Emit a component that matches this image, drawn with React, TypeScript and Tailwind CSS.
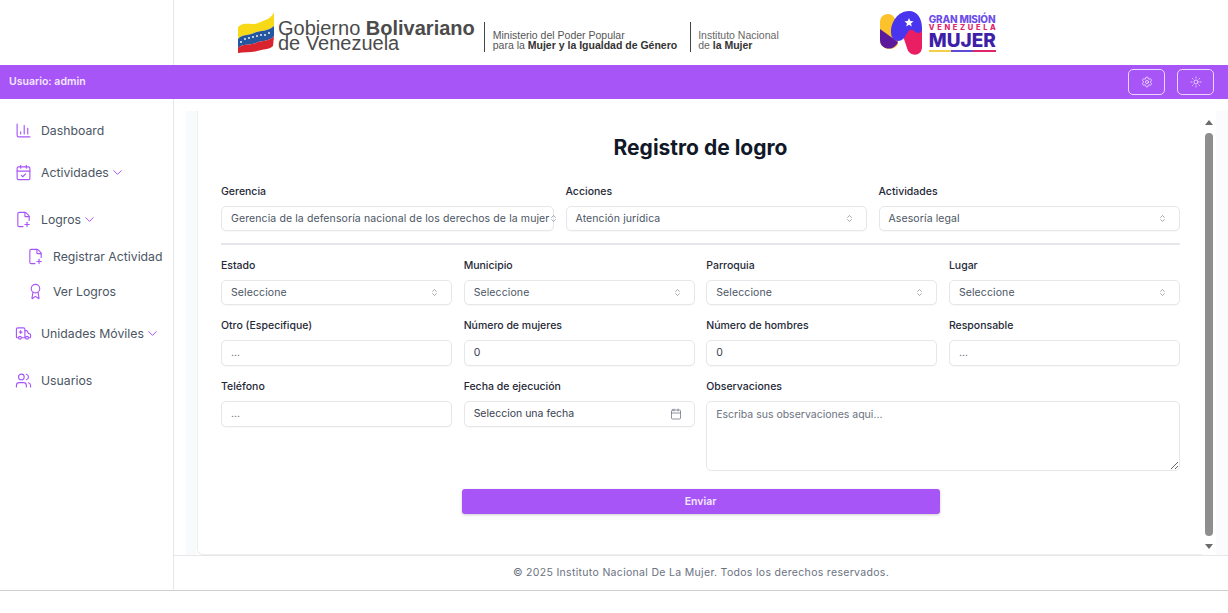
import React from 'react';
import {
  Ambulance,
  Award,
  Calendar,
  CalendarCheck,
  ChartColumn,
  ChevronDown,
  ChevronsUpDown,
  FilePlus2,
  Settings,
  Sun,
  Users,
} from 'lucide-react';

const FlagLogo = () => (
  <svg width="39" height="42" viewBox="0 0 39 42" className="shrink-0">
    <path d="M1 15 C8 9 14 14 21 11 C29 8 35 6 37 0 L37 14 C30 20 24 18 17 21 C10 24 5 22 1 27 Z" fill="#f7d917" />
    <path d="M1 27 C5 22 10 24 17 21 C24 18 30 20 37 14 L37 24 C32 30 25 28 19 31 C12 34 6 31 1 36 Z" fill="#24579f" />
    <path d="M1 36 C6 31 12 34 19 31 C25 28 32 30 37 24 L36 34 C32 38 26 37 20 39 C14 41 7 40 1 41 Z" fill="#d9232e" />
    <g fill="#ffffff">
      <circle cx="4" cy="30" r="0.9" /><circle cx="8" cy="27" r="0.9" /><circle cx="12" cy="26" r="0.9" />
      <circle cx="16" cy="25" r="0.9" /><circle cx="20" cy="24" r="0.9" /><circle cx="24" cy="23" r="0.9" />
      <circle cx="28" cy="23" r="0.9" /><circle cx="32" cy="21" r="0.9" />
    </g>
  </svg>
);

const MujerLogo = () => (
  <svg width="46" height="46" viewBox="0 0 46 46" className="shrink-0">
    <path d="M2 12 C2 3 14 1 17 9 L20 20 L20 34 C16 42 2 40 2 30 Z" fill="#fcc22c" />
    <path d="M2 19 L20 32 C16 42 2 40 2 30 Z" fill="#5b1a9c" />
    <path d="M30 16 L44 19 L44 37 C44 47 31 47 29 38 L25 26 Z" fill="#e91e63" />
    <path d="M13 22 C13 12 20 1 31 1 C39 1 44 8 44 18 C44 24 40 24 36 21 C31 17 29 24 26 28 C22 33 13 32 13 22 Z" fill="#4a35ee" />
    <path d="M31 8 L32.3 11 L35.5 11.3 L33 13.4 L33.8 16.5 L31 14.8 L28.2 16.5 L29 13.4 L26.5 11.3 L29.7 11 Z" fill="#ffffff" />
  </svg>
);

const NavItem = ({ icon: Icon, label, chevron, className }: { icon: React.ElementType; label: string; chevron?: boolean; className?: string }) => (
  <div className={`flex items-center text-[12.25px] leading-4 text-[#4b5563] ${className ?? ''}`}>
    <Icon className="w-[17px] h-[17px] text-[#a855f7] shrink-0" strokeWidth={1.6} />
    <span className="ml-[9px]">{label}</span>
    {chevron && <ChevronDown className="w-[15px] h-[15px] ml-[1px] text-[#a855f7]" strokeWidth={1.6} />}
  </div>
);

const Field = ({ label, children, className }: { label: string; children: React.ReactNode; className?: string }) => (
  <div className={className}>
    <div className="text-[10.5px] leading-[15px] font-medium text-[#1f2937]">{label}</div>
    <div className="mt-[7px]">{children}</div>
  </div>
);

const Select = ({ value, tight }: { value: string; tight?: boolean }) => (
  <div className={`flex items-center justify-between h-[25px] pl-[9px] ${tight ? 'pr-[13px]' : 'pr-[12px]'} bg-white border border-[#e5e7eb] rounded-[5px] shadow-[0_1px_1px_rgba(0,0,0,0.03)] text-[10.5px] tracking-[0.01em] text-[#4b5563]`}>
    <span className="whitespace-nowrap">{value}</span>
    <ChevronsUpDown className="w-[9px] h-[9px] text-[#6b7280] shrink-0" strokeWidth={1.6} />
  </div>
);

const Input = ({ value, muted }: { value: string; muted?: boolean }) => (
  <div className={`flex items-center h-[26px] pl-[9px] bg-white border border-[#e5e7eb] rounded-[5px] shadow-[0_1px_1px_rgba(0,0,0,0.03)] text-[10.5px] ${muted ? 'text-[#6b7280]' : 'text-[#374151]'}`}>
    {value}
  </div>
);

const App: React.FC = () => {
  return (
    <div className="h-[613px] w-[1228px] overflow-hidden bg-white font-['Inter',sans-serif]">
      <div className="h-[591px] flex flex-col border-b border-[#cfcfcf]">
        {/* top logos */}
        <div className="h-[65px] flex shrink-0">
          <div className="w-[174px] border-r border-[#e5e7eb]" />
          <div className="flex-1 flex items-center pl-[63px] font-['Liberation_Sans',sans-serif]">
            <FlagLogo />
            <div className="ml-[2px] mt-[6px] text-[20px] leading-[15px] text-[#4b4b4b]">
              <div className="whitespace-nowrap">Gobierno <span className="font-bold">Bolivariano</span></div>
              <div className="whitespace-nowrap">de Venezuela</div>
            </div>
            <div className="w-px h-[30px] bg-[#444444] ml-[9px] mt-[8px]" />
            <div className="ml-[8px] mt-[14px] text-[10.5px] leading-[10px] text-[#555555] whitespace-nowrap">
              <div>Ministerio del Poder Popular</div>
              <div>para la <span className="font-bold text-[#333333]">Mujer y la Igualdad de Género</span></div>
            </div>
            <div className="w-px h-[30px] bg-[#444444] ml-[13px] mt-[8px]" />
            <div className="ml-[7px] mt-[14px] text-[10.5px] leading-[10px] text-[#666666] whitespace-nowrap">
              <div>Instituto Nacional</div>
              <div>de <span className="font-bold text-[#333333]">la Mujer</span></div>
            </div>
            <div className="ml-[99px]"><MujerLogo /></div>
            <div className="ml-[5px] font-['Inter',sans-serif] font-extrabold flex flex-col items-stretch">
              <div className="text-[10px] leading-[10px] text-[#6d4ee8] whitespace-nowrap tracking-[-0.02em]">GRAN MISIÓN</div>
              <div className="text-[7.5px] leading-[8px] text-[#e0246a] flex justify-between"><span>V</span><span>E</span><span>N</span><span>E</span><span>Z</span><span>U</span><span>E</span><span>L</span><span>A</span></div>
              <div className="text-[19px] leading-[17px] text-[#3d1fa8] whitespace-nowrap">MUJER</div>
              <div className="flex h-[2px] mt-[1px]">
                <div className="flex-1 bg-[#f2cf4a]" /><div className="flex-1 bg-[#5d4bd8]" /><div className="flex-1 bg-[#e0246a]" />
              </div>
            </div>
          </div>
        </div>

        {/* purple bar */}
        <div className="h-[34px] shrink-0 bg-[#a855f7] flex items-center pl-[9px] pr-[14px]">
          <span className="text-[10.5px] font-semibold text-[#f3e8ff]">Usuario: admin</span>
          <div className="ml-auto flex gap-[12px]">
            <div className="w-[37px] h-[26px] flex items-center justify-center border border-[#e9d5ff] rounded-[5px]">
              <Settings className="w-[12px] h-[12px] text-[#f3e8ff]" strokeWidth={1.6} />
            </div>
            <div className="w-[37px] h-[26px] flex items-center justify-center border border-[#e9d5ff] rounded-[5px]">
              <Sun className="w-[12px] h-[12px] text-[#f3e8ff]" strokeWidth={1.6} />
            </div>
          </div>
        </div>

        <div className="flex-1 flex min-h-0">
          {/* sidebar */}
          <div className="w-[174px] shrink-0 border-r border-[#e5e7eb] pl-[15px] pt-[23px]">
            <NavItem icon={ChartColumn} label="Dashboard" />
            <NavItem icon={CalendarCheck} label="Actividades" chevron className="mt-[25px]" />
            <NavItem icon={FilePlus2} label="Logros" chevron className="mt-[30px]" />
            <NavItem icon={FilePlus2} label="Registrar Actividad" className="mt-[20px] ml-[12px]" />
            <NavItem icon={Award} label="Ver Logros" className="mt-[18px] ml-[12px]" />
            <NavItem icon={Ambulance} label="Unidades Móviles" chevron className="mt-[25px]" />
            <NavItem icon={Users} label="Usuarios" className="mt-[30px]" />
          </div>

          <div className="flex-1 flex flex-col min-w-0">
            <div className="flex-1 flex min-h-0 pl-[12px] pt-[12px]">
              <div className="w-[11px] bg-[#f9fafb] shrink-0" />
              {/* card */}
              <div className="flex-1 min-w-0 border-l border-b border-[#eeeeee] rounded-bl-[6px] pl-[23px] pr-[22px]">
                <h1 className="mt-[22px] text-center text-[21px] leading-[30px] font-bold text-[#111827]">Registro de logro</h1>
                <div className="mt-[21px] grid grid-cols-[333px_1fr_1fr] gap-x-[11.5px]">
                  <Field label="Gerencia"><Select value="Gerencia de la defensoría nacional de los derechos de la mujer" tight /></Field>
                  <Field label="Acciones"><Select value="Atención jurídica" /></Field>
                  <Field label="Actividades"><Select value="Asesoría legal" /></Field>
                </div>
                <div className="mt-[12px] h-[2px] bg-[#e5e7eb]" />
                <div className="mt-[13px] grid grid-cols-4 gap-x-[11.5px] gap-y-[13px]">
                  <Field label="Estado"><Select value="Seleccione" /></Field>
                  <Field label="Municipio"><Select value="Seleccione" /></Field>
                  <Field label="Parroquia"><Select value="Seleccione" /></Field>
                  <Field label="Lugar"><Select value="Seleccione" /></Field>
                  <Field label="Otro (Especifique)"><Input value="..." muted /></Field>
                  <Field label="Número de mujeres"><Input value="0" /></Field>
                  <Field label="Número de hombres"><Input value="0" /></Field>
                  <Field label="Responsable"><Input value="..." muted /></Field>
                  <Field label="Teléfono"><Input value="..." muted /></Field>
                  <Field label="Fecha de ejecución">
                    <div className="flex items-center justify-between h-[26px] pl-[9px] pr-[12px] bg-white border border-[#e5e7eb] rounded-[5px] shadow-[0_1px_1px_rgba(0,0,0,0.03)] text-[10.5px] text-[#374151]">
                      <span>Seleccion una fecha</span>
                      <Calendar className="w-[12px] h-[12px] text-[#6b7280]" strokeWidth={1.5} />
                    </div>
                  </Field>
                  <Field label="Observaciones" className="col-span-2">
                    <textarea
                      readOnly
                      placeholder="Escriba sus observaciones aqui..."
                      className="block w-full h-[70px] px-[9px] py-[6px] bg-white border border-[#e5e7eb] rounded-[5px] text-[10.5px] leading-[14px] placeholder:text-[#6b7280] outline-none"
                    />
                  </Field>
                </div>
                <div className="mt-[18px] flex justify-center">
                  <div className="w-[478px] h-[25px] flex items-center justify-center bg-[#a855f7] rounded-[3px] shadow-[0_1px_3px_rgba(0,0,0,0.2)] text-[10.5px] font-semibold text-[#f3e8ff]">
                    Enviar
                  </div>
                </div>
              </div>
              {/* scrollbar */}
              <div className="w-[14px] shrink-0 flex flex-col items-center bg-white pb-[6px] -mt-[12px] pt-[21px]">
                <div className="w-0 h-0 border-x-[4px] border-x-transparent border-b-[5px] border-b-[#6b6b6b]" />
                <div className="flex-1 w-[8px] mt-[8px] mb-[8px] rounded-full bg-[#8e8e8e]" />
                <div className="w-0 h-0 border-x-[4px] border-x-transparent border-t-[5px] border-t-[#6b6b6b]" />
              </div>
              <div className="w-[12px] shrink-0 bg-[#fbfbfd]" />
            </div>
            <div className="h-[35px] shrink-0 border-t border-[#e5e7eb] flex items-center justify-center text-[10.5px] tracking-[0.03em] text-[#6b7280]">
              © 2025 Instituto Nacional De La Mujer. Todos los derechos reservados.
            </div>
          </div>
        </div>
      </div>
    </div>
  );
};

export default App;
